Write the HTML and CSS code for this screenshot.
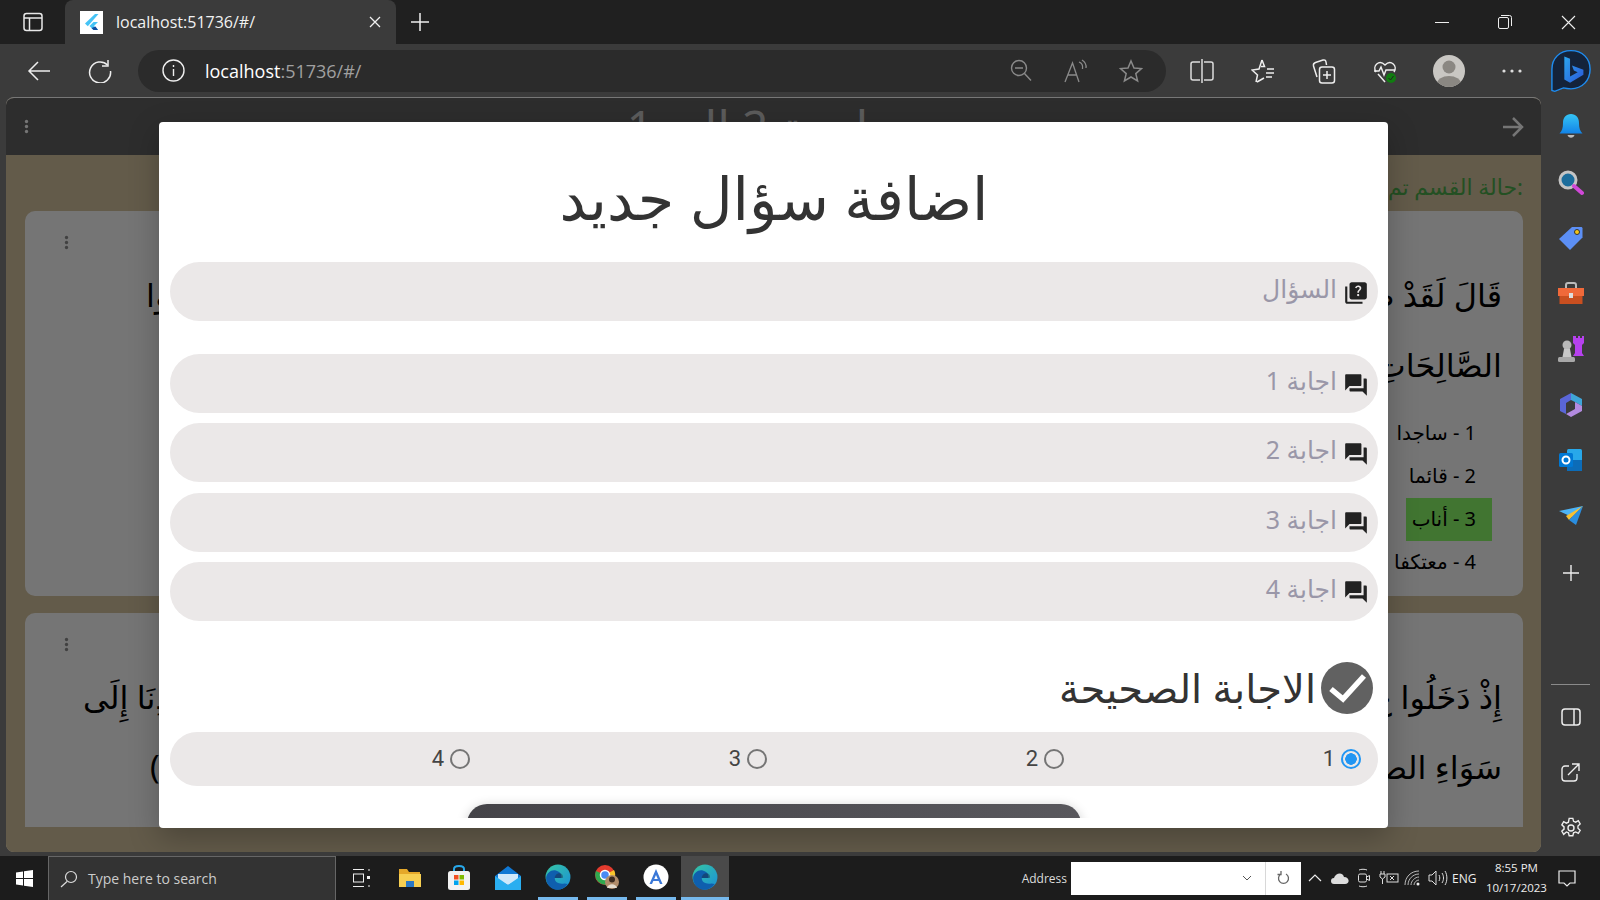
FILE: index.html
```html
<!DOCTYPE html>
<html lang="en">
<head>
  <meta charset="UTF-8">
  <meta name="viewport" content="width=device-width, initial-scale=1">
  <title>localhost:51736/#/</title>
  <link rel="stylesheet" href="styles.css">
</head>
<body>

  <svg class="sprite" width="0" height="0">
    <defs>
      <linearGradient id="bellGrad" x1="0" y1="0" x2="0" y2="1"><stop offset="0" stop-color="#35c5f5"/><stop offset="1" stop-color="#1283e8"/></linearGradient>
      <linearGradient id="edgeGrad" x1="0" y1="0" x2="1" y2="1"><stop offset="0" stop-color="#36c6a3"/><stop offset="1" stop-color="#1a8fd8"/></linearGradient>
      <linearGradient id="bingGrad" x1="0" y1="0" x2="1" y2="1"><stop offset="0" stop-color="#2ba6f0"/><stop offset="1" stop-color="#2b58d8"/></linearGradient>
      <symbol id="edge" viewBox="0 0 24 24">
        <circle cx="12" cy="12" r="11.5" fill="url(#edgeGrad)"/>
        <path d="M1 13c.5-5 5-8 9-7 4 1 6 4 5 7H9c0 4 4 6 9 5l3 .5C18 23 13 24.500 9 23.500 4 22 1 18 1 13z" fill="#0f5fae"/>
        <path d="M9 13h7c1 0 1-3-1-4-3-1.500-6 1-6 4z" fill="#1d1d1d" opacity=".35"/>
      </symbol>
      <symbol id="forum" viewBox="0 0 24 24"><path d="M21 6h-2v9H6v2c0 .55.45 1 1 1h11l4 4V7c0-.55-.45-1-1-1zm-4 6V3c0-.55-.45-1-1-1H3c-.55 0-1 .45-1 1v14l4-4h10c.55 0 1-.45 1-1z"/></symbol>
      <symbol id="kebab" viewBox="0 0 6 18"><circle cx="3" cy="3" r="2"/><circle cx="3" cy="9" r="2"/><circle cx="3" cy="15" r="2"/></symbol>
    </defs>
  </svg>

  <div class="tabstrip">
    <div class="tab-side">
      <svg width="20" height="20" viewBox="0 0 20 20" fill="none" stroke="#e8e8e8" stroke-width="1.500"><rect x="1" y="1.500" width="18" height="17" rx="2.500"/><path d="M1 6h18M6.500 6v12.500"/></svg>
    </div>
    <div class="tab">
      <span class="favicon">
        <svg width="23" height="23" viewBox="0 0 23 23"><rect width="23" height="23" fill="#fff"/><path d="M15 3 5 12.500l2.800 2.800L18.500 3z" fill="#45c3f5"/><path d="M18 11h-4.500l-4 4 4 4h4.500l-4-4z" fill="#45c3f5"/><path d="m11.500 17 2 2h4.500l-2.500-3.500z" fill="#0d4da1"/></svg>
      </span>
      <span class="tab-title">localhost:51736/#/</span>
      <svg class="tab-close" width="12" height="12" viewBox="0 0 12 12" stroke="#f0f0f0" stroke-width="1.300"><path d="M1 1l10 10M11 1 1 11"/></svg>
    </div>
    <div class="tab-new">
      <svg width="20" height="20" viewBox="0 0 20 20" stroke="#eee" stroke-width="1.500"><path d="M10 1v18M1 10h18"/></svg>
    </div>
    <div class="tab-fill"></div>
    <div class="win-btn"><svg width="14" height="14" viewBox="0 0 14 14" stroke="#eee"><path d="M0 7.500h14"/></svg></div>
    <div class="win-btn"><svg width="16" height="16" viewBox="0 0 16 16" fill="none" stroke="#eee"><rect x="1.500" y="3.500" width="10" height="11" rx="1.500"/><path d="M4 1.500h8.500a2 2 0 0 1 2 2V12"/></svg></div>
    <div class="win-btn"><svg width="15" height="15" viewBox="0 0 15 15" stroke="#eee" stroke-width="1.100"><path d="M1 1l13 13M14 1 1 14"/></svg></div>
  </div>

  <div class="toolbar">
    <div class="tool"><svg width="24" height="22" viewBox="0 0 24 22" fill="none" stroke="#eee" stroke-width="1.500"><path d="M23 11H2M11 2l-9 9 9 9"/></svg></div>
    <div class="tool"><svg width="24" height="24" viewBox="0 0 24 24" fill="none" stroke="#eee" stroke-width="1.500"><path d="M19.500 6a10.500 10.500 0 1 0 3 6"/><path d="M20 1v6h-6"/></svg></div>
    <div class="addressbar">
      <svg class="info-icon" width="23" height="23" viewBox="0 0 23 23" fill="none" stroke="#eee" stroke-width="1.400"><circle cx="11.500" cy="11.500" r="10.500"/><path d="M11.500 10v7M11.500 6v2"/></svg>
      <span class="url"><span class="url-host">localhost</span>:51736/#/</span>
      <span class="addr-fill"></span>
      <span class="addr-icon"><svg width="22" height="23" viewBox="0 0 22 23" fill="none" stroke="#8a8a8a" stroke-width="1.400"><circle cx="9" cy="9" r="7.500"/><path d="M5 9h8M14.500 14.500l6.500 7"/></svg></span>
      <span class="addr-icon"><svg width="24" height="24" viewBox="0 0 24 24" fill="none" stroke="#8a8a8a" stroke-width="1.300"><path d="M1 23 8.500 4 15 23M4 16h9M15 3c3 1 4 4 3.500 7M18 1c3 2 4.500 5 4 8"/></svg></span>
      <span class="addr-icon"><svg width="24" height="24" viewBox="0 0 24 24" fill="none" stroke="#8a8a8a" stroke-width="1.500"><path d="m12 2 3 7 7.500.6-5.700 5 1.800 7.400L12 18l-6.600 4 1.800-7.400-5.700-5L9 9z"/></svg></span>
    </div>
    <div class="tool-group">
      <div class="tool"><svg width="24" height="26" viewBox="0 0 24 26" fill="none" stroke="#ddd" stroke-width="1.500"><path d="M10 4H3a2 2 0 0 0-2 2v14a2 2 0 0 0 2 2h7M14 4h7a2 2 0 0 1 2 2v14a2 2 0 0 1-2 2h-7M12 1v24"/></svg></div>
      <div class="tool"><svg width="24" height="26" viewBox="0 0 24 26" fill="none" stroke="#eee" stroke-width="1.500"><path d="M11 2l2.500 6.500H10M5 24l1.500-7L1 12l7-1 3-9M6 24l7-4M16 11h7M15 15h8M15 19h6"/></svg></div>
      <div class="tool"><svg width="24" height="26" viewBox="0 0 24 26" fill="none" stroke="#eee" stroke-width="1.500"><path d="M5 19 1.500 8c-.4-2 .5-3 2-3.500L11 2c1.500-.4 2.700.2 3 2l.5 3"/><rect x="7.500" y="9" width="15" height="16" rx="2.500"/><path d="M15 13v8M11 17h8"/></svg></div>
      <div class="tool"><svg width="24" height="26" viewBox="0 0 24 26" fill="none" stroke="#eee" stroke-width="1.500"><path d="M3 14c-4-6 3-13 9-7 6-6 13 1 9 7"/><path d="M1 13h5l2-4 3 8 2-5h9"/><path d="M5 16l7 8"/><circle cx="18" cy="20" r="5" fill="#107c10" stroke="none"/><path d="m15.500 20 2 2 3-4" stroke="#222" stroke-width="1"/></svg></div>
      <div class="tool tool-avatar"><svg width="32" height="32" viewBox="0 0 32 32"><clipPath id="avatarClip"><circle cx="16" cy="16" r="16"/></clipPath><g clip-path="url(#avatarClip)"><rect width="32" height="32" fill="#c9c7c3"/><circle cx="16" cy="12" r="6.500" fill="#8a8782"/><ellipse cx="16" cy="29" rx="12" ry="8" fill="#8a8782"/></g></svg></div>
      <div class="tool tool-dots"><svg width="20" height="4" viewBox="0 0 20 4" fill="#ddd"><circle cx="2" cy="2" r="1.600"/><circle cx="10" cy="2" r="1.600"/><circle cx="18" cy="2" r="1.600"/></svg></div>
      <div class="tool tool-bing">
        <svg width="42" height="44" viewBox="0 0 44 52" preserveAspectRatio="none"><path d="M22 2C10 2 2 11 2 24v25l3 1 9-4c3 .8 6 1 8 1 12 0 20-10 20-23S34 2 22 2z" fill="#14233a" stroke="#1e8cf0" stroke-width="1.500"/><path d="M15 9l6 2.500v21l8-5-4-2-2-6 12 5v6L21 40l-6-4z" fill="url(#bingGrad)"/></svg>
      </div>
    </div>
  </div>

  <div class="workspace">
    <main class="page">
      <div class="appbar">
        <svg class="appbar-menu" width="5" height="15" fill="#fff"><use href="#kebab"/></svg>
        <h1 class="appbar-title" dir="rtl">مراجعة 2 الى 1</h1>
        <svg width="22" height="20" viewBox="0 0 22 20" fill="none" stroke="#fff" stroke-width="2.500"><path d="M1 10h19M11 1l9 9-9 9"/></svg>
      </div>
      <div class="scroller">
        <p class="status" dir="rtl">:حالة القسم تم النشر</p>

        <section class="card card-first" dir="rtl">
          <div class="verse-line"><span>قَالَ لَقَدْ ظَ</span><span class="verse-end end-a">وَعَمِلُوا</span></div>
          <div class="verse-line"><span>الصَّالِحَاتِ</span></div>
          <ul class="answers">
            <li>1 - ساجدا</li>
            <li>2 - قائما</li>
            <li class="answer-ok">3 - أناب</li>
            <li>4 - معتكفا</li>
          </ul>
          <svg class="card-menu" width="5" height="15"><use href="#kebab"/></svg>
        </section>

        <section class="card" dir="rtl">
          <div class="verse-line"><span>إِذْ دَخَلُوا عَ</span><span class="verse-end">وَاهْدِنَا إِلَى</span></div>
          <div class="verse-line"><span>سَوَاءِ الصِّ</span><span class="verse-end end-b">(22)</span></div>
          <svg class="card-menu" width="5" height="15"><use href="#kebab"/></svg>
        </section>
      </div>

      <div class="scrim"></div>

      <div class="modal">
        <div class="modal-scroll">
          <h2 class="modal-title" dir="rtl">اضافة سؤال جديد</h2>

          <div class="field field-question" dir="rtl">
            <svg class="field-icon" width="26" height="26" viewBox="0 0 24 24"><path d="M4 6H2v14c0 1.100.9 2 2 2h14v-2H4V6zm16-4H8c-1.100 0-2 .9-2 2v12c0 1.100.9 2 2 2h12c1.100 0 2-.9 2-2V4c0-1.100-.9-2-2-2zm-5.990 13c-.59 0-1.050-.47-1.050-1.050 0-.59.47-1.040 1.050-1.040.59 0 1.040.45 1.040 1.040-.01.58-.45 1.050-1.040 1.050zm2.500-6.170c-.63.93-1.230 1.210-1.560 1.810-.13.24-.18.4-.18 1.180h-1.520c0-.41-.06-1.080.26-1.650.41-.73 1.180-1.160 1.630-1.800.48-.68.21-1.940-1.140-1.940-.88 0-1.320.67-1.500 1.230l-1.370-.57C11.510 5.960 12.520 5 13.990 5c1.230 0 2.080.56 2.510 1.260.37.61.58 1.730.01 2.570z"/></svg>
            <span class="field-label">السؤال</span>
          </div>
          <div class="field" dir="rtl"><svg class="field-icon" width="26" height="26"><use href="#forum"/></svg><span class="field-label">اجابة 1</span></div>
          <div class="field" dir="rtl"><svg class="field-icon" width="26" height="26"><use href="#forum"/></svg><span class="field-label">اجابة 2</span></div>
          <div class="field" dir="rtl"><svg class="field-icon" width="26" height="26"><use href="#forum"/></svg><span class="field-label">اجابة 3</span></div>
          <div class="field" dir="rtl"><svg class="field-icon" width="26" height="26"><use href="#forum"/></svg><span class="field-label">اجابة 4</span></div>

          <div class="correct-head" dir="rtl">
            <svg width="52" height="52" viewBox="0 0 52 52"><circle cx="26" cy="26" r="26" fill="#616161"/><path d="m10 27 12 10 21-23" fill="none" stroke="#fff" stroke-width="5.500"/></svg>
            <span>الاجابة الصحيحة</span>
          </div>

          <div class="radios" dir="rtl">
            <label class="radio radio-on"><i></i>1</label>
            <label class="radio"><i></i>2</label>
            <label class="radio"><i></i>3</label>
            <label class="radio"><i></i>4</label>
          </div>

          <div class="save-btn"></div>
        </div>
      </div>
    </main>

    <aside class="sidebar">
      <span class="side-icon side-bell"><svg width="24" height="26" viewBox="0 0 24 26"><path d="M12 0c5 0 8 3.500 8 9 0 5 1 8 3.500 10.500H.5C3 17 4 14 4 9c0-5.500 3-9 8-9z" fill="url(#bellGrad)"/><path d="M8.500 21h7c-1 3.500-6 3.500-7 0z" fill="#bbb"/></svg></span>
      <span class="side-icon"><svg width="26" height="26" viewBox="0 0 26 26"><circle cx="10" cy="10" r="8" fill="#1c6d9c" stroke="#c4c4c4" stroke-width="3"/><path d="m16 16 8 7" stroke="#d048d8" stroke-width="4" stroke-linecap="round"/></svg></span>
      <span class="side-icon"><svg width="26" height="26" viewBox="0 0 26 26"><path d="M14 2h9c1 0 1.500.6 1.500 1.500v9L12 25 1 14z" fill="#5c8ff5"/><circle cx="19" cy="7" r="2.500" fill="#f5c518" stroke="#333"/></svg></span>
      <span class="side-icon"><svg width="26" height="24" viewBox="0 0 26 24"><path d="M8 6V3c0-1 1-2 2-2h6c1 0 2 1 2 2v3" fill="none" stroke="#bbb" stroke-width="2"/><rect x="0" y="6" width="26" height="8" fill="#f0693a"/><rect x="1.500" y="14" width="23" height="8" fill="#c94f20"/><rect x="11" y="11" width="4" height="5" fill="#ddd"/></svg></span>
      <span class="side-icon"><svg width="28" height="28" viewBox="0 0 28 28"><circle cx="10" cy="10" r="4.500" fill="#b8b8b8"/><path d="M7 14h6l1.500 8h-9z" fill="#c8c8c8"/><rect x="1" y="22" width="17" height="5" rx="1.500" fill="#a8a8a8"/><path d="M16 1h3v2h2V1h2v2h2V1h2v7l-2 2v8l2 3H16l2-3v-8l-2-2z" fill="#b641ee"/></svg></span>
      <span class="side-icon"><svg width="24" height="26" viewBox="0 0 24 26"><path d="M12 1 23 7v7l-7-4-4-2z" fill="#3fa5d8"/><path d="M23 14v5L12 25l-5-3 9-5v-7z" fill="#b38be0"/><path d="M1 7v12l6 3V11l5-3V1z" fill="#5a66d8"/></svg></span>
      <span class="side-icon"><svg width="24" height="24" viewBox="0 0 24 24"><rect x="8" y="1" width="15" height="22" rx="1.500" fill="#28a8ea"/><path d="M8 12h15v11H8z" fill="#0c6cb8"/><rect x="0" y="5" width="14" height="14" rx="1.500" fill="#0078d4"/><circle cx="7" cy="12" r="3.500" fill="none" stroke="#fff" stroke-width="2"/></svg></span>
      <span class="side-icon"><svg width="24" height="20" viewBox="0 0 24 20"><path d="M0 5 24 0 13 11z" fill="#4db4f5"/><path d="M24 0 7 10l3 4z" fill="#f5c034"/><path d="M24 0 17 19l-7-5z" fill="#2a8ee0"/></svg></span>
      <span class="side-icon side-plus"><svg width="18" height="18" viewBox="0 0 18 18" stroke="#eee" stroke-width="1.400"><path d="M9 1v16M1 9h16"/></svg></span>
      <span class="side-fill"></span>
      <span class="side-rule"></span>
      <span class="side-icon"><svg width="20" height="18" viewBox="0 0 20 18" fill="none" stroke="#eee" stroke-width="1.500"><rect x="1" y="1" width="18" height="16" rx="3"/><path d="M13 1v16"/></svg></span>
      <span class="side-icon"><svg width="19" height="19" viewBox="0 0 19 19" fill="none" stroke="#eee" stroke-width="1.400"><path d="M8 3H4a3 3 0 0 0-3 3v9a3 3 0 0 0 3 3h9a3 3 0 0 0 3-3v-4M7 12 18 1M11 1h7v7"/></svg></span>
      <span class="side-icon"><svg width="22" height="24" viewBox="0 0 24 24" fill="none" stroke="#eee" stroke-width="1.500"><circle cx="12" cy="12" r="3.300"/><path d="M10 1.500h4l.8 3.200 2.300 1 2.900-1.600 2 3.400-2.400 2.300v2.400l2.400 2.300-2 3.400-2.900-1.600-2.300 1-.8 3.200h-4l-.8-3.200-2.300-1L4 18.900l-2-3.400 2.400-2.300v-2.400L2 8.500l2-3.400 2.900 1.600 2.300-1z"/></svg></span>
    </aside>
  </div>

  <footer class="taskbar">
    <div class="start"><svg width="17" height="17" viewBox="0 0 17 17" fill="#fff"><path d="M0 2.500 7 1.500v6.500H0zM8 1.300 17 0v8H8zM0 9h7v6.500l-7-1zM8 9h9v8l-9-1.300z"/></svg></div>
    <div class="search">
      <svg width="18" height="18" viewBox="0 0 18 18" fill="none" stroke="#ddd" stroke-width="1.200"><circle cx="11" cy="7" r="5.500"/><path d="M7 11.500 1 17"/></svg>
      <span>Type here to search</span>
    </div>
    <div class="task-app"><svg width="18" height="20" viewBox="0 0 18 20" fill="none" stroke="#eee"><path d="M1 1.500h11M1 18.500h11M17 1v2M17 17v2"/><rect x="1.500" y="6" width="10" height="8"/><rect x="15" y="8" width="3" height="3" fill="#eee" stroke="none"/></svg></div>
    <div class="task-app"><svg width="24" height="24" viewBox="0 0 24 24"><path d="M1 3h8l2 3h11v3H1z" fill="#e5a82a"/><path d="M1 8h22v13H1z" fill="#f7cf52"/><rect x="8" y="15" width="8" height="6" fill="#2a78c5"/></svg></div>
    <div class="task-app"><svg width="24" height="26" viewBox="0 0 24 26"><path d="M7 6V4c0-4 10-4 10 0v2" fill="none" stroke="#28a8ea" stroke-width="2"/><rect x="1" y="6" width="22" height="19" rx="2.500" fill="#f2f2f2"/><rect x="7" y="10" width="4.500" height="4.500" fill="#f25022"/><rect x="12.500" y="10" width="4.500" height="4.500" fill="#7fba00"/><rect x="7" y="15.500" width="4.500" height="4.500" fill="#00a4ef"/><rect x="12.500" y="15.500" width="4.500" height="4.500" fill="#ffb900"/></svg></div>
    <div class="task-app"><svg width="26" height="24" viewBox="0 0 26 24"><path d="M13 0 26 10v14H0V10z" fill="#0f78d4"/><path d="M3 8h20v6l-10 5L3 14z" fill="#cfe8fa"/><path d="M0 10l13 9 13-9v14H0z" fill="#2aaef0"/></svg></div>
    <div class="task-app task-open"><svg width="26" height="26"><use href="#edge"/></svg></div>
    <div class="task-app task-open"><svg width="26" height="26" viewBox="0 0 26 26"><circle cx="11" cy="11" r="10" fill="#e33b2e"/><path d="M11 11 20 6a10 10 0 0 1-5 14z" fill="#f8c52c"/><path d="M11 11 15 20A10 10 0 0 1 2 7z" fill="#2fa84f"/><circle cx="11" cy="11" r="4.500" fill="#4a8af4" stroke="#fff" stroke-width="1.500"/><circle cx="18" cy="18" r="7" fill="#b08c6a"/><circle cx="18" cy="15.500" r="3" fill="#3a2a20"/><path d="M13 24c1-5 9-5 10 0z" fill="#e4dccf"/></svg></div>
    <div class="task-app task-open"><svg width="26" height="26" viewBox="0 0 26 26"><circle cx="13" cy="13" r="12.500" fill="#fff"/><path d="M13 5 6.500 20h2.500L13 11l4 9h2.500z" fill="#3a78d8"/><path d="M9.500 15h7v2h-7z" fill="#3a78d8"/></svg></div>
    <div class="task-app task-open task-active"><svg width="26" height="26"><use href="#edge"/></svg></div>
    <div class="task-fill"></div>
    <span class="addr-label">Address</span>
    <div class="addr-box">
      <span class="addr-box-input"><svg width="10" height="6" viewBox="0 0 10 6" fill="none" stroke="#555"><path d="m1 1 4 4 4-4"/></svg></span>
      <span class="addr-box-go"><svg width="13" height="14" viewBox="0 0 13 14" fill="none" stroke="#666" stroke-width="1.300"><path d="M9 3a5 5 0 1 1-5 0M4 0v3.500H.5"/></svg></span>
    </div>
    <div class="tray">
      <span class="tray-item"><svg width="14" height="8" viewBox="0 0 14 8" fill="none" stroke="#eee" stroke-width="1.200"><path d="m1 7 6-6 6 6"/></svg></span>
      <span class="tray-item"><svg width="18" height="12" viewBox="0 0 18 12" fill="#ddd"><path d="M3 12a3 3 0 0 1 0-6c1-4 8-7 10-1 6 0 6 7 1 7z"/></svg></span>
      <span class="tray-item"><svg width="14" height="20" viewBox="0 0 14 20" fill="none" stroke="#ddd"><path d="M2 2c2-1 6-1 8 0M2 18c2 1 6 1 8 0"/><rect x="1.500" y="6" width="8" height="8" rx="1.500"/><path d="m9.500 9 3-1.500v5l-3-1.500"/></svg></span>
      <span class="tray-item"><svg width="20" height="16" viewBox="0 0 20 16" fill="none" stroke="#ddd"><path d="M2 1v3M5 1v3M1 4h5v3L3.500 9 1 7zM3.500 9v5"/><rect x="8" y="4" width="11" height="8"/><path d="m11 6 4 4M15 6l-4 4"/></svg></span>
      <span class="tray-item"><svg width="18" height="16" viewBox="0 0 18 16" fill="none" stroke="#bbb"><path d="M1 15C1 7 7 1 15 1M4 15c0-6 5-11 11-11M7 15c0-4 4-8 8-8M10 15c0-2.500 2.500-5 5-5"/><circle cx="14" cy="14" r="1.500" fill="#eee" stroke="none"/></svg></span>
      <span class="tray-item"><svg width="20" height="16" viewBox="0 0 20 16" fill="none" stroke="#ddd"><path d="M1 5h3l4-4v14l-4-4H1zM11 5c1 2 1 4 0 6M14 3c2 3 2 7 0 10M17 1c2.500 4 2.500 10 0 14"/></svg></span>
      <span class="tray-lang">ENG</span>
      <span class="clock"><span>8:55 PM</span><span>10/17/2023</span></span>
      <span class="tray-note"><svg width="18" height="17" viewBox="0 0 18 17" fill="none" stroke="#eee" stroke-width="1.200"><path d="M1 1h16v12h-5l-3 3-3-3H1z"/></svg></span>
    </div>
  </footer>

</body>
</html>
```

FILE: styles.css
```css
* {
  box-sizing: border-box;
}
html, body {
  margin: 0;
  height: 100%;
  overflow: hidden;
}
body {
  display: flex;
  flex-direction: column;
  width: 1600px;
  height: 900px;
  background: #3b3b3b;
  font-family: "Noto Sans", Roboto, "DejaVu Sans", sans-serif;
}
.sprite {
  position: absolute;
}

/* browser tabs */
.tabstrip {
  display: flex;
  height: 44px;
  background: #202020;
}
.tab-side {
  display: flex;
  align-items: center;
  justify-content: center;
  width: 65px;
}
.tab {
  display: flex;
  align-items: center;
  width: 331px;
  padding: 0 13px 0 15px;
  background: #3b3b3b;
  border-radius: 8px 8px 0 0;
  color: #f2f2f2;
  font-size: 16px;
}
.favicon {
  display: flex;
  width: 23px;
  height: 23px;
}
.tab-title {
  flex: 1;
  margin-left: 13px;
  font-family: "Open Sans", sans-serif;
}
.tab-close {
  margin-right: 2px;
}
.tab-new {
  display: flex;
  align-items: center;
  justify-content: center;
  width: 48px;
}
.tab-fill {
  flex: 1;
}
.win-btn {
  display: flex;
  align-items: center;
  justify-content: center;
  width: 63.300px;
}

/* address row */
.toolbar {
  display: flex;
  align-items: center;
  height: 53px;
  padding-left: 8px;
  background: #3b3b3b;
}
.tool {
  display: flex;
  align-items: center;
  justify-content: center;
  flex: none;
  width: 61px;
  height: 42px;
}
.tool-group {
  display: flex;
  flex: none;
  align-items: center;
  margin-left: 5px;
}
.tool-avatar {
  margin-left: 3px;
}
.tool-dots {
  margin-left: 2px;
}
.tool-bing {
  width: 58px;
}
.addressbar {
  display: flex;
  flex: none;
  align-items: center;
  width: 1028px;
  height: 42px;
  margin-left: 8px;
  padding: 0 8px 0 24px;
  background: #2b2b2b;
  border-radius: 21px;
}
.url {
  margin-left: 20px;
  color: #a0a0a0;
  font-family: "Open Sans", sans-serif;
  font-size: 18px;
}
.url-host {
  color: #fff;
}
.addr-fill {
  flex: 1;
}
.addr-icon {
  display: flex;
  justify-content: center;
  width: 55px;
}

/* middle: page and edge sidebar */
.workspace {
  display: flex;
  height: 759px;
}
.page {
  position: relative;
  display: flex;
  flex-direction: column;
  width: 1535px;
  height: 755px;
  margin-left: 6px;
  overflow: hidden;
  background: #d7c6a1;
  border-top: 1px solid #777;
  border-radius: 8px;
}
.appbar {
  display: flex;
  align-items: center;
  justify-content: space-between;
  flex: none;
  height: 57px;
  padding: 0 17px 0 18px;
  background: #626263;
}
.appbar-title {
  margin: 0 0 0 14px;
  color: #c9c9c9;
  font-size: 46px;
  font-weight: 400;
  line-height: 57px;
}
.scroller {
  flex: none;
  height: 672px;
  overflow: hidden;
  padding: 0 18px 0 19px;
}
.status {
  height: 56px;
  margin: 0;
  color: #4eae4c;
  font-size: 22px;
  line-height: 63px;
}
.card {
  position: relative;
  margin-bottom: 17px;
  padding: 49px 21px 0 58px;
  background: #fff;
  border-radius: 10px;
  color: #000;
}
.card-first {
  height: 385px;
}
.card + .card {
  height: 300px;
}
.card-menu {
  position: absolute;
  top: 24px;
  left: 39px;
  fill: #8f8f8f;
}
.verse-line {
  display: flex;
  justify-content: space-between;
  height: 70px;
  font-size: 32px;
  line-height: 70px;
  white-space: nowrap;
}
.end-a {
  margin-left: 63px;
}
.end-b {
  margin-left: 67px;
}
.answers {
  display: flex;
  flex-direction: column;
  align-items: flex-start;
  margin: 12px 0 0;
  padding: 0 10px 0 0;
  list-style: none;
  font-size: 20px;
}
.answers li {
  height: 43px;
  padding: 0 16px;
  line-height: 42px;
}
.answers .answer-ok {
  padding-left: 6px;
  background: #8eff6b;
}
.scrim {
  position: absolute;
  inset: 0;
  background: rgba(0, 0, 0, .54);
}

/* dialog */
.modal {
  position: absolute;
  top: 24px;
  left: 153px;
  width: 1229px;
  height: 706px;
  padding: 0 10px 10px 11px;
  background: #fff;
  border-radius: 4px;
  box-shadow: 0 10px 30px rgba(0, 0, 0, .25);
}
.modal-scroll {
  height: 100%;
  overflow: hidden;
}
.modal-title {
  height: 140px;
  margin: 0;
  color: #333;
  font-size: 59px;
  font-weight: 400;
  line-height: 150px;
  text-align: center;
}
.field {
  display: flex;
  align-items: center;
  height: 59px;
  margin-bottom: 10.300px;
  padding: 0 9px;
  background: #ebe8e8;
  border-radius: 30px;
  color: #9a97a8;
  font-size: 25px;
}
.field-question {
  margin-bottom: 33px;
}
.field-icon {
  flex: none;
  margin-top: 2px;
  margin-left: 6px;
  fill: #222;
}
.field-label {
  margin-bottom: 7px;
}
.correct-head {
  display: flex;
  align-items: center;
  gap: 5px;
  height: 52px;
  margin-top: 41px;
  padding-right: 5px;
  color: #333;
  font-size: 40px;
}
.radios {
  display: grid;
  grid-template-columns: repeat(4, 297px);
  height: 54px;
  margin-top: 18px;
  padding-right: 17px;
  background: #ebe8e8;
  border-radius: 27px;
}
.radio {
  display: flex;
  align-items: center;
  gap: 6px;
  color: #444;
  font-family: Roboto, sans-serif;
  font-size: 22px;
}
.radio i {
  width: 20px;
  height: 20px;
  border: 2px solid #757575;
  border-radius: 50%;
}
.radio-on i {
  border-color: #2196f3;
  background: radial-gradient(circle, #2196f3 0 5.500px, transparent 6px);
}
.save-btn {
  width: 614px;
  height: 60px;
  margin: 18.500px auto 0;
  background: linear-gradient(90deg, #444348, #59585d);
  border-radius: 20px;
  box-shadow: 0 2px 12px rgba(0, 0, 0, .2);
}

/* right hand edge sidebar */
.sidebar {
  display: flex;
  flex-direction: column;
  align-items: center;
  flex: 1;
  padding: 17px 0 0;
}
.side-icon {
  display: flex;
  align-items: center;
  justify-content: center;
  height: 55.500px;
}
.side-bell {
  height: 26px;
  margin-bottom: 15px;
}
.side-plus {
  margin-top: 2px;
}
.side-fill {
  flex: 1;
}
.side-rule {
  width: 39px;
  height: 1px;
  margin-bottom: 5px;
  background: #8a8a8a;
}

/* windows taskbar */
.taskbar {
  display: flex;
  align-items: stretch;
  height: 44px;
  background: #1c1c1c;
  color: #eee;
  font-family: "Open Sans", sans-serif;
}
.start {
  display: flex;
  align-items: center;
  justify-content: center;
  width: 48px;
}
.search {
  display: flex;
  align-items: center;
  gap: 10px;
  width: 288px;
  padding-left: 11px;
  background: #333;
  border: 1px solid #666;
  border-bottom: 0;
  color: #ccc;
  font-size: 14px;
}
.task-app {
  display: flex;
  align-items: center;
  justify-content: center;
  width: 49px;
}
.task-open {
  width: 40px;
  margin: 0 3px 0 6px;
  border-bottom: 3px solid #76b9ed;
}
.task-active {
  width: 48px;
  margin: 0 0 0 2px;
  background: #4a4a4a;
}
.task-fill {
  flex: 1;
}
.addr-label {
  align-self: center;
  margin-right: 4px;
  color: #ddd;
  font-size: 12px;
}
.addr-box {
  display: flex;
  align-self: center;
  width: 230px;
  height: 33px;
  background: #fff;
}
.addr-box-input {
  display: flex;
  align-items: center;
  justify-content: flex-end;
  width: 195px;
  padding-right: 13px;
  border-right: 1px solid #d8d8d8;
}
.addr-box-go {
  display: flex;
  align-items: center;
  justify-content: center;
  flex: 1;
}
.tray {
  display: flex;
  align-items: center;
  width: 299px;
  padding-left: 2px;
}
.tray-item {
  display: flex;
  justify-content: center;
  width: 24.500px;
}
.tray-lang {
  margin-left: 2px;
  font-size: 12px;
}
.clock {
  display: flex;
  flex-direction: column;
  align-items: center;
  width: 66px;
  margin-left: 7px;
  font-size: 11.500px;
  line-height: 20px;
}
.tray-note {
  display: flex;
  justify-content: center;
  width: 36px;
}
```
